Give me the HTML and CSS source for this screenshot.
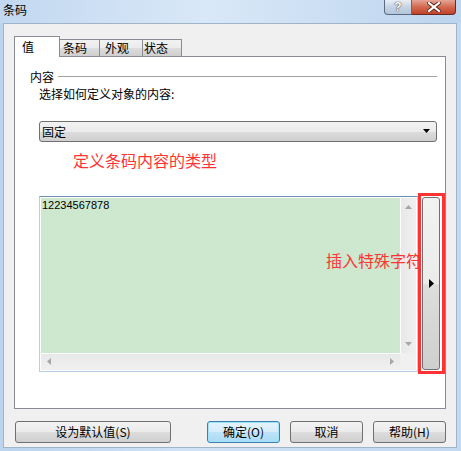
FILE: index.html
```html
<!DOCTYPE html>
<html lang="zh">
<head>
    <meta charset="UTF-8">
    <title>条码</title>
    <link rel="stylesheet" href="styles.css">
</head>
<body>

    <div class="window">
        <div class="titlebar">
            <span class="title">条码</span>
            <div class="caption-btns">
                <span class="cap-btn help">?</span>
                <span class="cap-btn close">
                    <svg width="14" height="10" viewBox="0 0 14 10">
                        <path d="M2 1 L12 9 M12 1 L2 9" stroke="#5a2418" stroke-width="4" stroke-linecap="square"/>
                        <path d="M2 1 L12 9 M12 1 L2 9" stroke="#fff" stroke-width="2.2" stroke-linecap="square"/>
                    </svg>
                </span>
            </div>
        </div>

        <div class="client">
            <div class="tabs">
                <div class="tab active">值</div>
                <div class="tab t2">条码</div>
                <div class="tab t3">外观</div>
                <div class="tab t4">状态</div>
            </div>

            <div class="panel">
                <div class="group-head"><span>内容</span><i></i></div>
                <div class="label">选择如何定义对象的内容:</div>
                <div class="select">
                    <span>固定</span>
                    <svg width="8" height="5" viewBox="0 0 8 5"><path d="M0 0 H7 L3.5 4 Z" fill="#000"/></svg>
                </div>
                <div class="note">定义条码内容的类型</div>

                <div class="editor-row">
                    <div class="editor">
                        <div class="editor-main">
                            <div class="text-area">12234567878</div>
                            <div class="vscroll">
                                <svg width="7" height="4" viewBox="0 0 7 4"><path d="M3.5 0 L7 4 H0 Z" fill="#a6a6a6"/></svg>
                                <svg width="7" height="4" viewBox="0 0 7 4"><path d="M0 0 H7 L3.5 4 Z" fill="#a6a6a6"/></svg>
                            </div>
                        </div>
                        <div class="hscroll-row">
                            <div class="hscroll">
                                <svg width="4" height="7" viewBox="0 0 4 7"><path d="M4 0 V7 L0 3.5 Z" fill="#a6a6a6"/></svg>
                                <svg width="4" height="7" viewBox="0 0 4 7"><path d="M0 0 V7 L4 3.5 Z" fill="#a6a6a6"/></svg>
                            </div>
                            <div class="corner"></div>
                        </div>
                    </div>
                    <div class="insert-box">
                        <div class="insert-btn">
                            <svg width="5" height="9" viewBox="0 0 5 9"><path d="M0 0 L5 4.5 L0 9 Z" fill="#000"/></svg>
                        </div>
                    </div>
                    <span class="note overlay">插入特殊字符</span>
                </div>
            </div>

            <div class="buttons">
                <div class="btn wide">设为默认值(S)</div>
                <div class="btn default">确定(O)</div>
                <div class="btn">取消</div>
                <div class="btn">帮助(H)</div>
            </div>
        </div>
    </div>

</body>
</html>
```

FILE: styles.css
```css
body {
    margin: 0;
    font-family: "Noto Sans CJK SC", "Liberation Sans", sans-serif;
    font-size: 12px;
    color: #000;
}

.window {
    width: 461px;
    height: 451px;
    background: linear-gradient(90deg, #bcd4ee, #cfe2f6 40%, #c3d9f1);
    display: flex;
    flex-direction: column;
}

.titlebar {
    height: 23px;
    display: flex;
    align-items: flex-start;
    background: linear-gradient(90deg, #c2d8f0, #d9e8f8 45%, #bcd4ee);
}

.title {
    margin: 2px 0 0 3px;
    line-height: 16px;
}

.caption-btns {
    margin-left: auto;
    margin-right: 5px;
    display: flex;
}

.cap-btn {
    height: 14px;
    border: 1px solid #5b6a80;
    border-top: none;
    display: flex;
    align-items: center;
    justify-content: center;
}

.help {
    width: 26px;
    border-radius: 0 0 0 4px;
    background: linear-gradient(#e8eef6, #c5d3e3 50%, #b4c6db);
    font-family: "Liberation Sans", sans-serif;
    font-weight: bold;
    font-size: 12px;
    color: #fff;
    text-shadow: 0 0 1px #334, 0 0 1px #334;
}

.close {
    width: 43px;
    border-left: none;
    border-color: #6b2a1e;
    border-radius: 0 0 4px 0;
    background: linear-gradient(#e6a595, #d2694f 50%, #c0432b);
}

.client {
    margin: 0 4px 3px 3px;
    flex: 1;
    background: #f0f0f0;
    border: 1px solid #9fb3c9;
    display: flex;
    flex-direction: column;
}

.tabs {
    display: flex;
    align-items: flex-end;
    height: 20px;
    margin: 12px 0 0 10px;
}

.tab {
    height: 17px;
    line-height: 16px;
    border: 1px solid #898c95;
    border-left: none;
    border-bottom: none;
    background: linear-gradient(#f2f2f2, #ebebeb 50%, #dddddd 51%, #cfcfcf);
    padding-left: 3px;
    box-sizing: border-box;
}

.tab.active {
    width: 46px;
    height: 21px;
    margin-bottom: -1px;
    border-left: 1px solid #898c95;
    background: #fff;
    padding: 2px 0 0 7px;
    position: relative;
    z-index: 1;
}

.t2 { width: 40px; }
.t3 { width: 43px; padding-left: 5px; }
.t4 { width: 39px; padding-left: 1px; }

.panel {
    margin: 0 10px 0 10px;
    height: 353px;
    box-sizing: border-box;
    background: #fff;
    border: 1px solid #898c95;
    display: flex;
    flex-direction: column;
}

.group-head {
    display: flex;
    align-items: center;
    margin: 12px 8px 0 15px;
    line-height: 16px;
}

.group-head i {
    flex: 1;
    height: 1px;
    margin: -2px 0 0 4px;
    background: #a0a0a0;
}

.label {
    margin: 1px 0 0 24px;
    line-height: 16px;
}

.select {
    margin: 19px 8px 0 24px;
    height: 21px;
    box-sizing: border-box;
    border: 1px solid #707070;
    border-radius: 3px;
    background: linear-gradient(#f2f2f2, #ebebeb 50%, #dddddd 51%, #cfcfcf);
    display: flex;
    align-items: center;
    padding: 0 5px 0 2px;
}

.select span {
    flex: 1;
    line-height: 16px;
}

.note {
    margin: 8px 0 0 58px;
    font-size: 16px;
    line-height: 20px;
    color: #ff3333;
}

.editor-row {
    margin: 23px 0 0 24px;
    height: 181px;
    display: flex;
    align-items: center;
    position: relative;
}

.editor {
    width: 379px;
    height: 176px;
    box-sizing: border-box;
    border: 1px solid #b5cfe7;
    border-top-color: #6f91b6;
    padding: 1px;
    background: #fff;
    display: flex;
    flex-direction: column;
}

.editor-main {
    flex: 1;
    display: flex;
}

.text-area {
    flex: 1;
    background: #cde8cf;
    font-family: "Liberation Sans", sans-serif;
    font-size: 11px;
    line-height: 14px;
    padding: 0 0 0 1px;
}

.vscroll {
    width: 15px;
    border-left: 1px solid #fff;
    background: linear-gradient(90deg, #e8e8e8, #f0f0f0);
    display: flex;
    flex-direction: column;
    align-items: center;
    justify-content: space-between;
    padding: 7px 0 7px;
}

.hscroll-row {
    height: 17px;
    display: flex;
}

.hscroll {
    flex: 1;
    border-top: 1px solid #fff;
    background: linear-gradient(#e8e8e8, #f0f0f0);
    display: flex;
    align-items: center;
    justify-content: space-between;
    padding: 0 6px 0 6px;
}

.corner {
    width: 16px;
    background: #f0f0f0;
}

.insert-box {
    width: 27px;
    height: 181px;
    box-sizing: border-box;
    border: 3px solid #ff3333;
    background: #fff;
    padding: 1px 2px 1px 1px;
    display: flex;
    position: relative;
    z-index: 2;
}

.insert-btn {
    flex: 1;
    border: 1px solid #707070;
    border-radius: 3px;
    background: linear-gradient(#f2f2f2, #ebebeb 50%, #dddddd 51%, #cfcfcf);
    display: flex;
    align-items: center;
    justify-content: center;
    padding-left: 1px;
}

.note.overlay {
    position: absolute;
    left: 287px;
    top: 57px;
    margin: 0;
    z-index: 1;
}

.buttons {
    display: flex;
    gap: 10px;
    margin: 12px 10px 0 11px;
}

.btn {
    width: 73px;
    height: 22px;
    box-sizing: border-box;
    border: 1px solid #707070;
    border-radius: 3px;
    background: linear-gradient(#f2f2f2, #ebebeb 50%, #dddddd 51%, #cfcfcf);
    text-align: center;
    line-height: 19px;
}

.btn.wide {
    width: 156px;
    margin-right: auto;
}

.btn.default {
    border-color: #3c7fb1;
    background: linear-gradient(#e5f4fc, #d4ecfa 50%, #bee3f8 51%, #a9daf5);
    box-shadow: inset 0 0 0 1px #9ee2fb;
}
```
